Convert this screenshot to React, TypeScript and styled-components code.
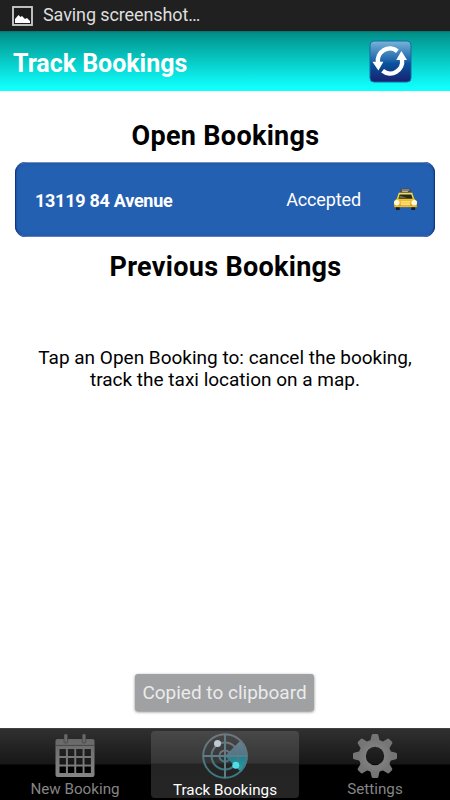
import React from "react";
import styled, { createGlobalStyle } from "styled-components";

const GlobalStyle = createGlobalStyle`
  * { box-sizing: border-box; }
  html, body { margin: 0; padding: 0; background: #fff; }
  body { font-family: Roboto, "Liberation Sans", sans-serif; overflow: hidden; }
  svg { display: block; flex: none; }
`;

const Screen = styled.div`
  position: relative;
  display: flex;
  flex-direction: column;
  width: 450px;
  height: 800px;
  background: #fff;
  overflow: hidden;
`;

const StatusBar = styled.div`
  display: flex;
  align-items: center;
  gap: 10px;
  height: 31px;
  padding: 0 12px;
  background: #202020;
  color: #dedede;
  font-size: 18px;
  letter-spacing: -0.1px;
  line-height: 28px;
  white-space: nowrap;

  span {
    margin-bottom: 2px;
  }
`;

const Header = styled.header`
  display: flex;
  align-items: center;
  justify-content: space-between;
  height: 60px;
  padding: 0 38px 0 13px;
  background: linear-gradient(#08746f 0, #018f87 2px, #029c95 12%, #0ffffd 94%);
`;

const Title = styled.h1`
  margin: 5px 0 0;
  color: #fff;
  font-size: 25px;
  font-weight: 700;
  letter-spacing: -0.03px;
  line-height: 30px;
  white-space: nowrap;
`;

const RefreshButton = styled.button`
  width: 43px;
  height: 43px;
  margin-top: 1px;
  padding: 0;
  border: 0;
  background: none;
`;

const Content = styled.main`
  flex: 1;
  display: flex;
  flex-direction: column;
  padding: 30px 15px 0;
`;

const SectionTitle = styled.h2`
  margin: 0;
  height: 30px;
  line-height: 30px;
  color: #000;
  font-size: 27px;
  font-weight: 700;
  letter-spacing: 0.3px;
  text-indent: 1px;
  text-align: center;
  white-space: nowrap;
`;

const BookingRow = styled.div`
  display: flex;
  align-items: center;
  height: 75px;
  margin: 11px 0 15px;
  padding: 0 17px 0 20px;
  border-radius: 11px;
  background: #2460b2;
  box-shadow:
    inset 1px 0 1px #0c3183,
    inset -1px 0 1px #0c3183,
    inset 0 1px 0 #8ba9cd,
    inset 0 -1px 0 #6f94cb,
    inset 0 0 4px #194c92;
  color: #fff;
`;

const Address = styled.span`
  flex: 1;
  margin-top: 2px;
  font-size: 18px;
  font-weight: 700;
  letter-spacing: -0.27px;
  white-space: nowrap;
`;

const Status = styled.span`
  margin-right: 32px;
  font-size: 18px;
  letter-spacing: -0.12px;
  white-space: nowrap;
`;

const Hint = styled.p`
  margin: 65px 0 0;
  color: #000;
  font-size: 19px;
  line-height: 22px;
  text-align: center;
  white-space: nowrap;
`;

const Toast = styled.div`
  position: absolute;
  left: 135px;
  top: 674px;
  width: 179px;
  height: 37px;
  border-radius: 3px;
  background: #9fa1a3;
  box-shadow: 0 1px 3px rgba(0, 0, 0, 0.5);
  color: #ebebeb;
  font-size: 19px;
  line-height: 38px;
  text-align: center;
  white-space: nowrap;
`;

const TabBar = styled.nav`
  display: grid;
  grid-template-columns: 1fr 1fr 1fr;
  height: 72px;
  border-top: 1px solid #424242;
  background: linear-gradient(#303030 0, #171717 35px, #000 36px);
`;

const Tab = styled.div<{ $active?: boolean }>`
  display: flex;
  flex-direction: column;
  align-items: center;
  height: 67px;
  margin: 2px 1px 0;
  padding-top: 2px;
  border-radius: 4px;
  background: ${(p) =>
    p.$active ? "linear-gradient(#484848 0, #353535 32px, #242424 33px, #252525)" : "none"};
  color: ${(p) => (p.$active ? "#fff" : "#858585")};
`;

const TabLabel = styled.span<{ $active?: boolean }>`
  margin-top: ${(p) => (p.$active ? 1 : 0)}px;
  font-size: 15.2px;
  line-height: 20px;
  white-space: nowrap;
`;

const PictureIcon = () => (
  <svg width="21" height="20" viewBox="0 0 21 20">
    <rect x="1" y="1" width="19" height="18" fill="#1c1c1c" stroke="#d0d0d0" strokeWidth="1.8" />
    <path d="M3 17v-4l3.5-4 2 2 1.5-1 3 3 2-1 3 3v2z" fill="#fff" />
  </svg>
);

const RefreshIcon = () => (
  <svg width="43" height="43" viewBox="0 0 43 43">
    <defs>
      <linearGradient id="refreshFill" x1="0" y1="0" x2="0" y2="1">
        <stop offset="0" stopColor="#78b5d8" />
        <stop offset=".45" stopColor="#2368ad" />
        <stop offset=".55" stopColor="#08529e" />
        <stop offset="1" stopColor="#18216f" />
      </linearGradient>
    </defs>
    <rect x="1" y="1" width="41" height="41" rx="4" fill="url(#refreshFill)" stroke="#176ba5" />
    <g fill="none" stroke="#fff" strokeWidth="4.4">
      <path d="M9 22.5A12 12 0 0 1 28.4 11.2" />
      <path d="M33 19.5A12 12 0 0 1 13.6 30.8" />
    </g>
    <path d="M3.4 21.7h11L9.4 30.5zM27.2 20.1L32.4 11l5.6 9.1z" fill="#fff" />
  </svg>
);

const TaxiIcon = () => (
  <svg width="25" height="24" viewBox="0 1 26 24">
    <defs>
      <linearGradient id="taxiBody" x1="0" y1="0" x2="0" y2="1">
        <stop offset="0" stopColor="#f7df55" />
        <stop offset=".5" stopColor="#edc51f" />
        <stop offset="1" stopColor="#c88b0c" />
      </linearGradient>
    </defs>
    <rect x="3" y="19" width="4" height="4.5" rx="1" fill="#151a26" />
    <rect x="19" y="19" width="4" height="4.5" rx="1" fill="#151a26" />
    <path d="M8 1h10l1 2-1 3H8L7 3z" fill="#4c4b45" />
    <path d="M9 2.6h8M9.5 4.2h6" stroke="#c8c4b5" strokeWidth=".9" />
    <path d="M6 5.5h14l2 6 3 3v6H1v-6l3-3z" fill="url(#taxiBody)" />
    <path d="M7 7.4h12l1.4 4.2H5.6z" fill="#242a25" />
    <path d="M7 8.4l8 2.6H6.4z" fill="#656757" />
    <rect x="8" y="14" width="10" height="4.5" rx=".8" fill="#ffdc7b" />
    <path d="M8 16h10" stroke="#e9bb52" strokeWidth=".7" />
    <circle cx="4" cy="15.8" r="2.9" fill="#fff9df" />
    <circle cx="22" cy="15.8" r="2.9" fill="#fff9df" />
    <path d="M1.5 19.5h23" stroke="#f2d04b" />
  </svg>
);

const CalendarIcon = () => (
  <svg width="46" height="46" viewBox="0 0 46 46">
    <defs>
      <linearGradient id="calendarFill" x1="0" y1="0" x2="0" y2="1">
        <stop offset="0" stopColor="#686868" />
        <stop offset="1" stopColor="#858585" />
      </linearGradient>
    </defs>
    <path
      fillRule="evenodd"
      fill="url(#calendarFill)"
      transform="translate(1.5 0)"
      d="M4 6h35a2 2 0 0 1 2 2v34a2 2 0 0 1-2 2H4a2 2 0 0 1-2-2V8a2 2 0 0 1 2-2zM6 16v7h6.4v-7zM14.4 16v7h6.4v-7zM22.7 16v7h6.4v-7zM31 16v7h6.4v-7zM6 25v6.5h6.4v-6.5zM14.4 25v6.5h6.4v-6.5zM22.7 25v6.5h6.4v-6.5zM31 25v6.5h6.4v-6.5zM6 33.5v6.5h6.4v-6.5zM14.4 33.5v6.5h6.4v-6.5zM22.7 33.5v6.5h6.4v-6.5zM31 33.5v6.5h6.4v-6.5z"
    />
    <path d="M3.5 12.4h39" stroke="#484848" />
    <rect x="12" y="1" width="3.6" height="9" rx="1" fill="#686868" stroke="#343434" strokeWidth=".5" />
    <rect x="30.2" y="1" width="3.6" height="9" rx="1" fill="#686868" stroke="#343434" strokeWidth=".5" />
  </svg>
);

const RadarIcon = () => (
  <svg width="46" height="46" viewBox="0 0 46 46">
    <defs>
      <linearGradient id="radarLine" x1="0" y1="0" x2="0" y2="1">
        <stop offset="0" stopColor="#71777e" />
        <stop offset="1" stopColor="#397983" />
      </linearGradient>
      <linearGradient id="radarSweep" x1="0" y1="0" x2="0" y2="1">
        <stop offset="0" stopColor="#71889a" />
        <stop offset=".5" stopColor="#507e91" />
        <stop offset=".51" stopColor="#188b9b" />
        <stop offset="1" stopColor="#31afb9" />
      </linearGradient>
    </defs>
    <path d="M23 23L39 7a22.5 22.5 0 0 1 0 32z" fill="url(#radarSweep)" opacity=".88" />
    <g fill="none" stroke="url(#radarLine)" strokeWidth="2">
      <circle cx="23" cy="23" r="21.8" />
      <circle cx="23" cy="23" r="13.5" />
      <circle cx="23" cy="23" r="5.6" />
    </g>
    <path d="M23 1v44M1 23h44" stroke="#607c87" strokeWidth="2" />
    <circle cx="15.5" cy="10.5" r="3.5" fill="#bec9d7" />
    <circle cx="33.8" cy="32.2" r="3.5" fill="#54dce4" />
  </svg>
);

const gearTeeth = [0, 45, 90, 135, 180, 225, 270, 315];

const GearIcon = () => (
  <svg width="46" height="46" viewBox="0 0 46 46">
    <defs>
      <radialGradient id="gearFill">
        <stop offset="0" stopColor="#8c8c8c" />
        <stop offset="1" stopColor="#767676" />
      </radialGradient>
      <mask id="gearHole">
        <rect width="46" height="46" fill="#fff" />
        <circle cx="23" cy="23" r="9.2" fill="#000" />
      </mask>
    </defs>
    <g mask="url(#gearHole)" fill="#757575">
      {gearTeeth.map((angle) => (
        <path
          key={angle}
          d="M18 9l1.7-7q.3-1 1.3-1h4q1 0 1.3 1L28 9z"
          transform={`rotate(${angle} 23 23)`}
        />
      ))}
      <circle cx="23" cy="23" r="16.4" fill="url(#gearFill)" />
    </g>
  </svg>
);

export default function App() {
  return (
    <>
      <GlobalStyle />
      <Screen>
        <StatusBar>
          <PictureIcon />
          <span>Saving screenshot…</span>
        </StatusBar>
        <Header>
          <Title>Track Bookings</Title>
          <RefreshButton aria-label="Refresh">
            <RefreshIcon />
          </RefreshButton>
        </Header>
        <Content>
          <SectionTitle>Open Bookings</SectionTitle>
          <BookingRow>
            <Address>13119 84 Avenue</Address>
            <Status>Accepted</Status>
            <TaxiIcon />
          </BookingRow>
          <SectionTitle>Previous Bookings</SectionTitle>
          <Hint>
            Tap an Open Booking to: cancel the booking,
            <br />
            track the taxi location on a map.
          </Hint>
        </Content>
        <Toast>Copied to clipboard</Toast>
        <TabBar>
          <Tab>
            <CalendarIcon />
            <TabLabel>New Booking</TabLabel>
          </Tab>
          <Tab $active>
            <RadarIcon />
            <TabLabel $active>Track Bookings</TabLabel>
          </Tab>
          <Tab>
            <GearIcon />
            <TabLabel>Settings</TabLabel>
          </Tab>
        </TabBar>
      </Screen>
    </>
  );
}
